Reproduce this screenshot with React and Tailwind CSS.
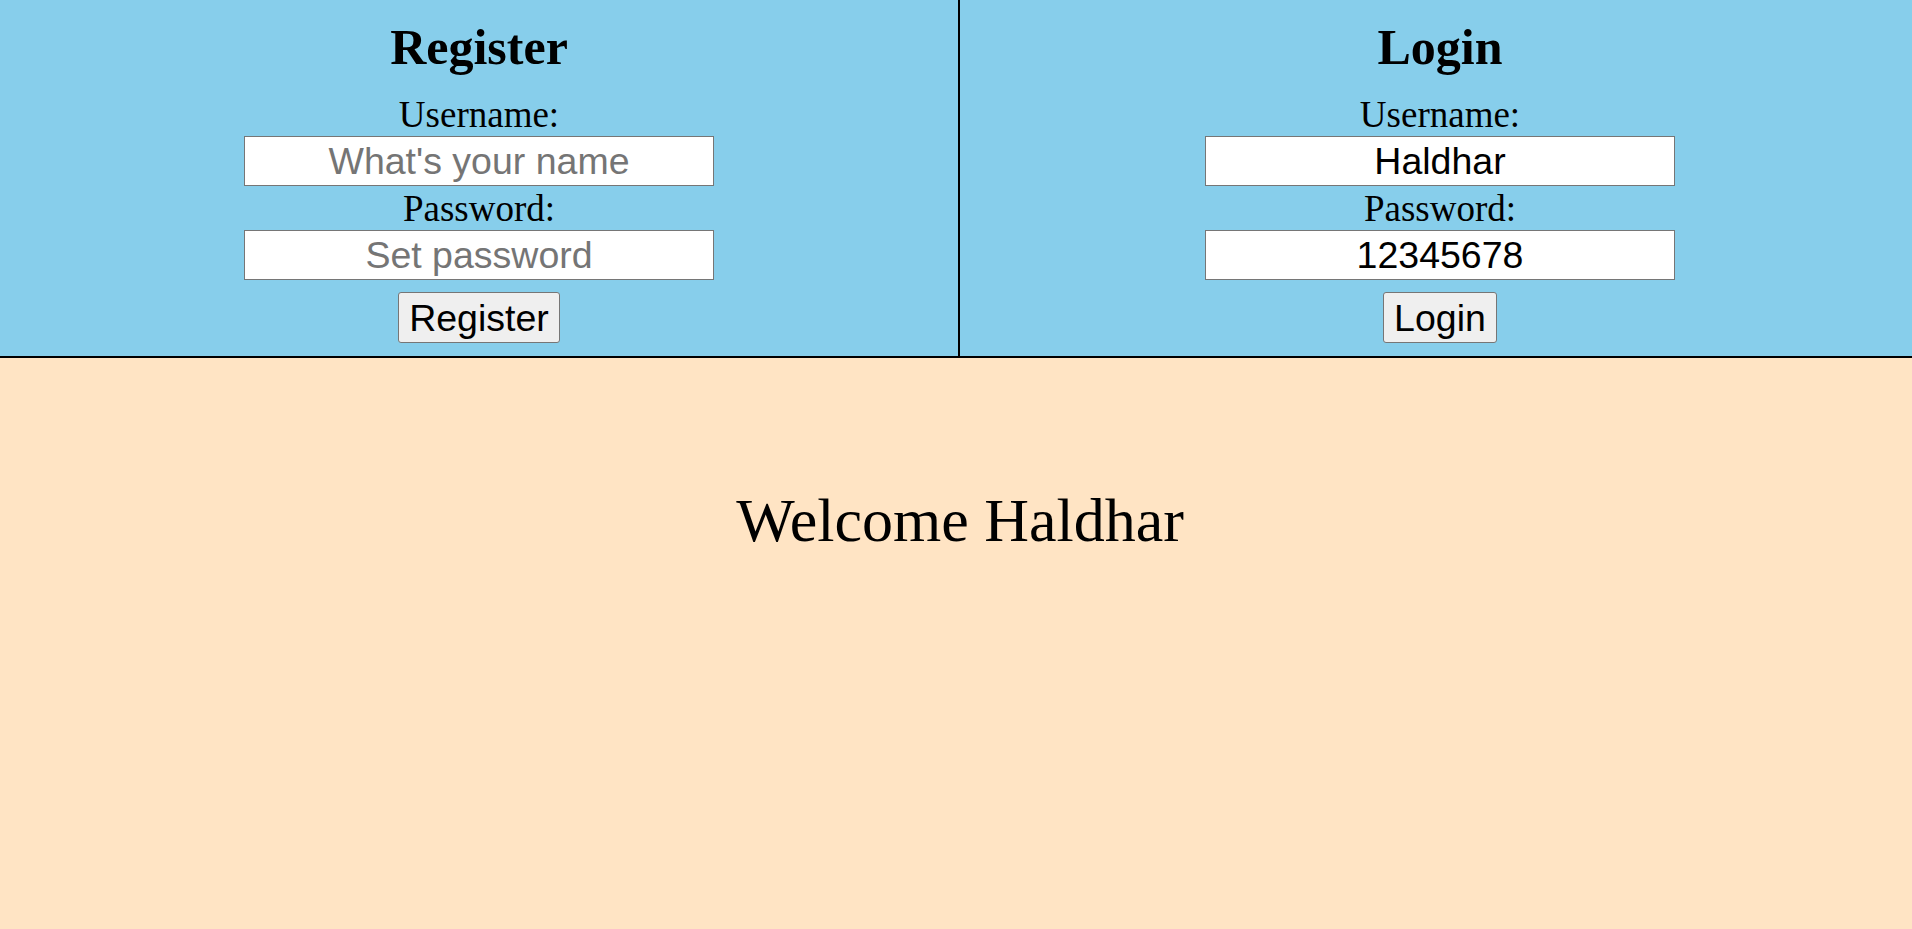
export default function App() {
  const serif = { fontFamily: '"Liberation Serif", "Times New Roman", serif' };
  const Panel = ({ title, fields, button, extra }) => (
    <div className={`flex flex-col items-center pt-[20px] pb-[13px] ${extra}`} style={serif}>
      <h1 className="text-[50px] font-bold leading-[55px] text-black">{title}</h1>
      {fields.map((f, i) => (
        <div key={i} className="flex flex-col items-center">
          <label className={`text-[37px] leading-[41px] text-black ${i === 0 ? "mt-[19px]" : "mt-[2px]"}`}>
            {f.label}
          </label>
          <input
            type="text"
            placeholder={f.placeholder}
            defaultValue={f.value}
            className="mt-[1px] h-[50px] w-[470px] border border-[#767676] bg-white px-[3px] text-center text-[37.5px] text-black placeholder:text-[#757575] [font-family:'Liberation_Sans',Arial,sans-serif] outline-none"
          />
        </div>
      ))}
      <button className="mt-[12px] h-[51px] rounded-[3px] border border-[#767676] bg-[#efefef] px-[10px] text-[37.5px] leading-[48px] text-black [font-family:'Liberation_Sans',Arial,sans-serif]">
        {button}
      </button>
    </div>
  );

  return (
    <div className="flex min-h-screen w-full flex-col">
      <div className="flex w-full border-b-2 border-black bg-[#87ceeb]">
        <Panel
          title="Register"
          extra="w-[960px] shrink-0 border-r-2 border-black"
          fields={[
            { label: "Username:", placeholder: "What's your name" },
            { label: "Password:", placeholder: "Set password" },
          ]}
          button="Register"
        />
        <Panel
          title="Login"
          extra="flex-1 pl-[8px]"
          fields={[
            { label: "Username:", value: "Haldhar" },
            { label: "Password:", value: "12345678" },
          ]}
          button="Login"
        />
      </div>
      <div className="flex-1 bg-[#ffe4c4] pl-[8px] pt-[129px] text-center" style={serif}>
        <p className="text-[62px] leading-[66px] text-black">Welcome Haldhar</p>
      </div>
    </div>
  );
}
